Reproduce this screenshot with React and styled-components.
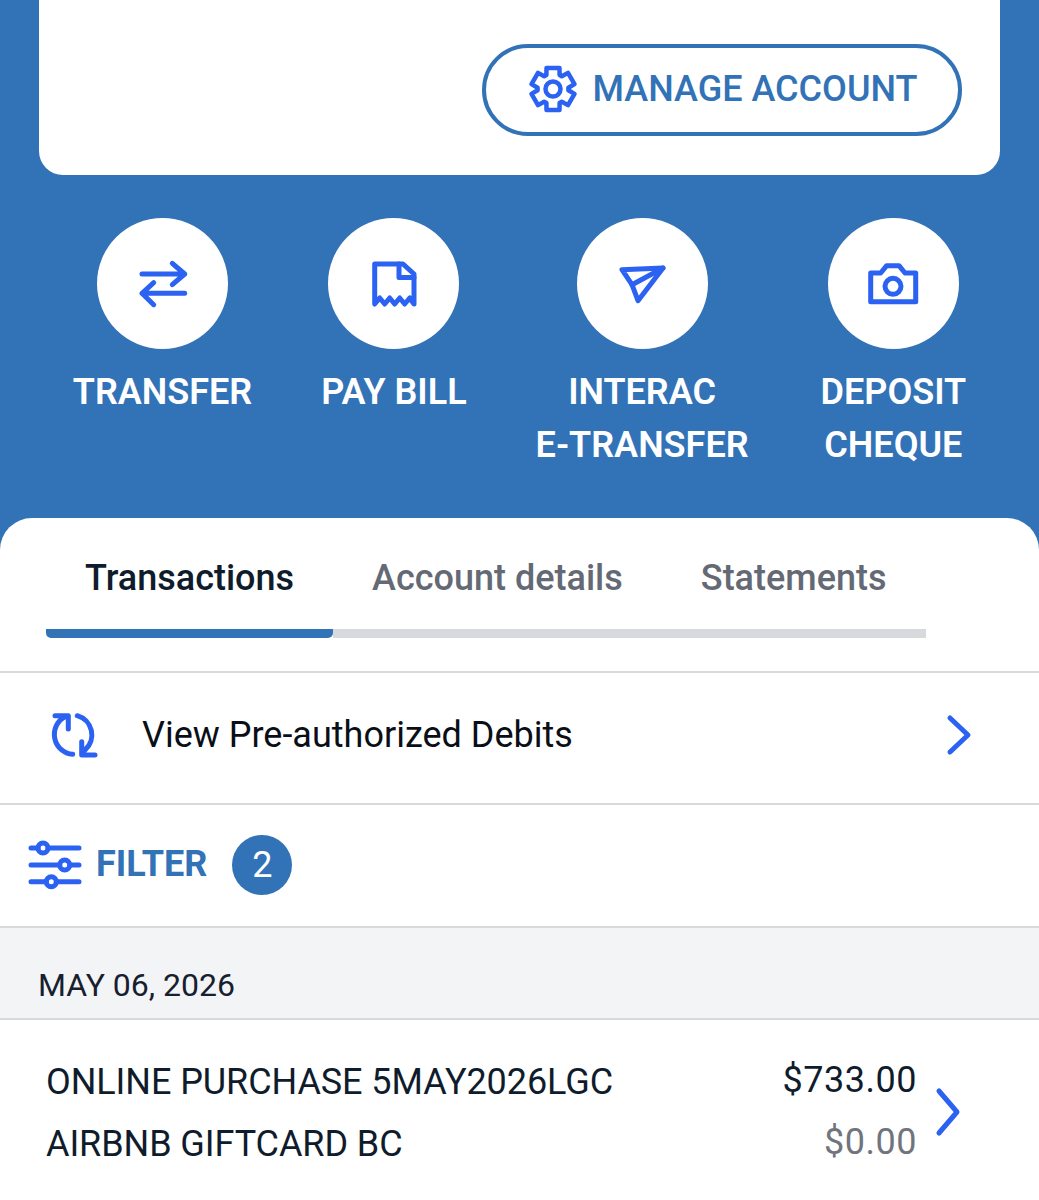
import React from 'react';
import styled, { createGlobalStyle } from 'styled-components';

const BLUE = '#3272b6';
const ICON = '#2b62f2';

const Global = createGlobalStyle`
  html, body {
    margin: 0;
    padding: 0;
    background: ${BLUE};
  }
  body {
    font-family: Roboto, "Liberation Sans", sans-serif;
    overflow-x: hidden;
  }
  * {
    box-sizing: border-box;
  }
`;

const Page = styled.div`
  width: 1039px;
  height: 1200px;
  overflow: hidden;
  background: ${BLUE};
`;

const TopCard = styled.div`
  height: 175px;
  margin: 0 39px;
  padding: 44px 38px 0 0;
  display: flex;
  justify-content: flex-end;
  align-items: flex-start;
  background: #fff;
  border-radius: 0 0 24px 24px;
`;

const ManageButton = styled.button`
  width: 480px;
  height: 92px;
  display: flex;
  align-items: center;
  justify-content: center;
  gap: 16px;
  padding: 0 0 2px 2px;
  background: #fff;
  border: 4px solid ${BLUE};
  border-radius: 46px;
  color: ${BLUE};
  font: 500 36px Roboto, sans-serif;
`;

const Actions = styled.div`
  display: flex;
  justify-content: center;
  align-items: flex-start;
  gap: 69px;
  height: 343px;
  padding-top: 43px;
`;

const Action = styled.div`
  display: flex;
  flex-direction: column;
  align-items: center;
  color: #fff;
  font-size: 36px;
  font-weight: 600;
  line-height: 53px;
  text-align: center;
  &:last-child {
    margin-left: 3px;
  }
`;

const Circle = styled.div`
  width: 131px;
  height: 131px;
  margin-bottom: 17px;
  display: flex;
  align-items: center;
  justify-content: center;
  background: #fff;
  border-radius: 50%;
`;

const Sheet = styled.div`
  background: #fff;
  border-radius: 32px 32px 0 0;
  height: 700px;
`;

const Tabs = styled.div`
  display: flex;
  margin: 0 114px 0 46px;
  height: 153px;
  padding-top: 32px;
  align-items: flex-start;
`;

const Tab = styled.div`
  height: 88px;
  padding: 8px 39px 0;
  font-size: 36px;
  font-weight: 500;
  line-height: 41px;
  white-space: nowrap;
  color: ${p => (p.$active ? '#0f1c2c' : '#646a75')};
  border-bottom: 9px solid ${p => (p.$active ? BLUE : '#d7d9dd')};
  border-radius: ${p => (p.$active ? '0 0 5px 5px' : '0')};
`;

const Divider = styled.div`
  height: 2px;
  background: #d8d9dd;
`;

const DebitsRow = styled.div`
  height: 130px;
  display: flex;
  align-items: center;
  padding: 0 68px 6px 51px;
  gap: 43px;
  color: #0a0f17;
  font-size: 36px;
`;

const Grow = styled.div`
  flex: 1;
`;

const FilterRow = styled.div`
  height: 121px;
  display: flex;
  align-items: center;
  padding: 0 0 2px 29px;
  color: ${BLUE};
  font-size: 36px;
  font-weight: 700;
`;

const FilterLabel = styled.span`
  margin: 0 25px 2px 15px;
`;

const Badge = styled.span`
  width: 60px;
  height: 60px;
  display: flex;
  align-items: center;
  justify-content: center;
  background: ${BLUE};
  border-radius: 50%;
  color: #fff;
  font-size: 36px;
  font-weight: 400;
`;

const DateHeader = styled.div`
  height: 90px;
  padding: 39px 0 0 38px;
  background: #f3f4f6;
  color: #16202e;
  font-size: 32px;
  line-height: 36px;
`;

const Transaction = styled.div`
  display: flex;
  align-items: center;
  padding: 31px 79px 0 46px;
  color: #0f1c2c;
  font-size: 36px;
  line-height: 62px;
  letter-spacing: -0.08px;
`;

const Amounts = styled.div`
  margin: -4px 19px 0 0;
  text-align: right;
  letter-spacing: 0.5px;
`;

const Pending = styled.div`
  color: #70747d;
`;

const RowChevron = styled.span`
  display: flex;
  margin-top: -2px;
`;

function gearPath() {
  const pts = [];
  for (let i = 0; i < 6; i++) {
    const a = (i * Math.PI) / 3 - Math.PI / 2;
    [
      [-0.44, 15.5],
      [-0.3, 22],
      [0.3, 22],
      [0.44, 15.5],
    ].forEach(([d, r]) => {
      pts.push([24 + r * Math.cos(a + d), 24 + r * Math.sin(a + d)]);
    });
  }
  return 'M' + pts.map(p => p[0].toFixed(1) + ' ' + p[1].toFixed(1)).join('L') + 'Z';
}

const Icon = ({ w = 48, h = 48, box = '0 0 48 48', stroke = 5, children }) => (
  <svg
    width={w}
    height={h}
    viewBox={box}
    overflow="visible"
    fill="none"
    stroke={ICON}
    strokeWidth={stroke}
    strokeLinecap="round"
    strokeLinejoin="round"
  >
    {children}
  </svg>
);

const actions = [
  {
    label: ['TRANSFER'],
    icon: (
      <Icon>
        <path d="M3 14H45.7M33.3 3.3L45.7 14L33.3 24.7M45.7 33.3H3M14.7 22.7L3 33.3L14.7 44.7" />
      </Icon>
    ),
  },
  {
    label: ['PAY BILL'],
    icon: (
      <Icon>
        <path d="M4.7 44V4H33L44 14V44L39.7 38L34.7 44L29.7 38L24.7 44L19.7 38L14.7 44L9.7 38Z" />
        <path d="M29 4V17.5H44" />
      </Icon>
    ),
  },
  {
    label: ['INTERAC', 'E-TRANSFER'],
    icon: (
      <Icon>
        <path d="M4 9.7L45 8L20 40.7L14 24.7Z" />
        <path d="M14 24.7L45 8" />
      </Icon>
    ),
  },
  {
    label: ['DEPOSIT', 'CHEQUE'],
    icon: (
      <Icon>
        <path d="M1.7 13H11.7L17.7 5.7H30L36 13H46.7V41.7H1.7Z" />
        <circle cx="24" cy="26.3" r="8" />
      </Icon>
    ),
  },
];

export default function App() {
  return (
    <Page>
      <Global />
      <TopCard>
        <ManageButton>
          <Icon stroke={4.5}>
            <path d={gearPath()} />
            <circle cx="24" cy="24" r="7.5" />
          </Icon>
          MANAGE ACCOUNT
        </ManageButton>
      </TopCard>

      <Actions>
        {actions.map(a => (
          <Action key={a.label[0]}>
            <Circle>{a.icon}</Circle>
            {a.label.map(line => (
              <div key={line}>{line}</div>
            ))}
          </Action>
        ))}
      </Actions>

      <Sheet>
        <Tabs>
          <Tab $active>Transactions</Tab>
          <Tab>Account details</Tab>
          <Tab>Statements</Tab>
        </Tabs>
        <Divider />
        <DebitsRow>
          <Icon>
            <path d="M4 4.7H17.3V18M14 5.7A20 20 0 0 0 21.7 43.3" />
            <path d="M30.7 30.7V44H44M26.3 4.7A20 20 0 0 1 34 39" />
          </Icon>
          View Pre-authorized Debits
          <Grow />
          <Icon w={24} h={40} box="0 0 24 40">
            <path d="M3 3L21 20L3 37" />
          </Icon>
        </DebitsRow>
        <Divider />
        <FilterRow>
          <Icon w={52} h={50} box="0 0 52 50">
            <path d="M2 8H9M19 8H50M2 25H30.700M41 25H50M2 41.700H17.300M27.300 41.700H50" />
            <circle cx="14" cy="8" r="5" />
            <circle cx="35.700" cy="25" r="5" />
            <circle cx="22.300" cy="41.700" r="5" />
          </Icon>
          <FilterLabel>FILTER</FilterLabel>
          <Badge>2</Badge>
        </FilterRow>
        <Divider />
        <DateHeader>MAY 06, 2026</DateHeader>
        <Divider />
        <Transaction>
          <div>
            <div>ONLINE PURCHASE 5MAY2026LGC</div>
            <div>AIRBNB GIFTCARD BC</div>
          </div>
          <Grow />
          <Amounts>
            <div>$733.00</div>
            <Pending>$0.00</Pending>
          </Amounts>
          <RowChevron>
            <Icon w={24} h={48} box="0 0 24 48">
              <path d="M3 3L21 24L3 45" />
            </Icon>
          </RowChevron>
        </Transaction>
      </Sheet>
    </Page>
  );
}
